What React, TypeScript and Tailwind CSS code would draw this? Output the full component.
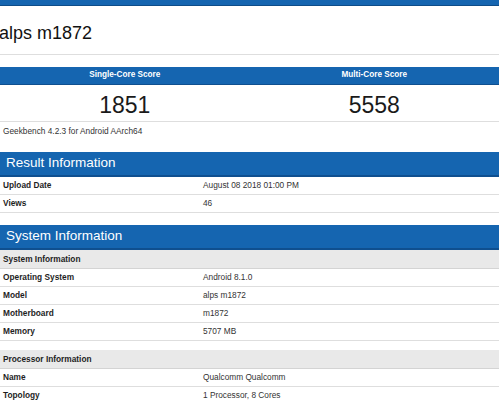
const rowLine = "border-b border-[#dedede]";

function Row({ label, value }: { label: string; value: string }) {
  return (
    <div className={`flex h-[18px] items-center ${rowLine}`}>
      <div className="w-[203px] pl-[3px] font-bold text-[8.3px] text-[#1e1e1e]">{label}</div>
      <div className="flex-1 text-[8.3px] text-[#333]">{value}</div>
    </div>
  );
}

function SectionHeader({ title }: { title: string }) {
  return (
    <div className="h-[25px] flex items-center pl-[6px] bg-[#1565b0] border-b-2 border-[#0f4f8f] text-white text-[13.5px]">
      {title}
    </div>
  );
}

function SubHeader({ title }: { title: string }) {
  return (
    <div className="h-[19px] flex items-center pl-[3px] bg-[#e9e9e9] border-b border-[#d4d4d4] font-bold text-[8.3px] text-[#1e1e1e]">
      {title}
    </div>
  );
}

export default function App() {
  return (
    <div className="w-[499px] h-[401px] overflow-hidden bg-white font-['Liberation_Sans',Arial,sans-serif]">
      <div className="h-[6px] bg-[#1565b0] border-b border-[#0e4c88]" />
      <div className={`h-[49px] flex items-center pt-[7px] ${rowLine}`}>
        <h1 className="text-[18px] text-[#111] -ml-px">alps m1872</h1>
      </div>

      <div className="mt-[12px]">
        <div className="grid grid-cols-2 h-[18px] bg-[#1565b0] border-b border-[#0f4f8f] text-white font-bold text-[8.2px]">
          <div className="flex items-center justify-center">Single-Core Score</div>
          <div className="flex items-center justify-center">Multi-Core Score</div>
        </div>
        <div className={`grid grid-cols-2 h-[37px] pt-[3px] ${rowLine} text-[23px] text-[#1a1a1a]`}>
          <div className="flex items-center justify-center">1851</div>
          <div className="flex items-center justify-center">5558</div>
        </div>
        <div className="h-[18px] flex items-center pl-[3px] text-[8.3px] text-[#333]">
          Geekbench 4.2.3 for Android AArch64
        </div>
      </div>

      <div className="mt-[12px]">
        <SectionHeader title="Result Information" />
        <Row label="Upload Date" value="August 08 2018 01:00 PM" />
        <Row label="Views" value="46" />
      </div>

      <div className="mt-[12px]">
        <SectionHeader title="System Information" />
        <SubHeader title="System Information" />
        <Row label="Operating System" value="Android 8.1.0" />
        <Row label="Model" value="alps m1872" />
        <Row label="Motherboard" value="m1872" />
        <Row label="Memory" value="5707 MB" />
        <div className="h-[9px]" />
        <SubHeader title="Processor Information" />
        <Row label="Name" value="Qualcomm Qualcomm" />
        <Row label="Topology" value="1 Processor, 8 Cores" />
      </div>
    </div>
  );
}
